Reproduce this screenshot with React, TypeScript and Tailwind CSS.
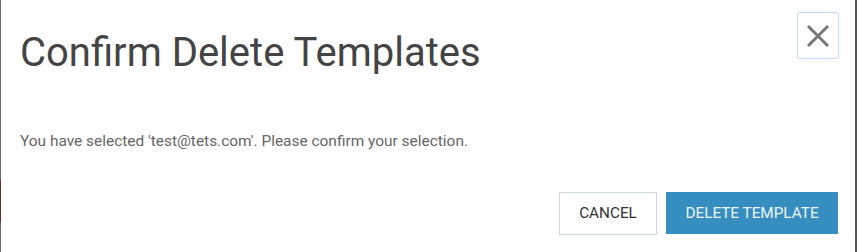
export default function App() {
  return (
    <div className="flex h-[252px] w-[857px] bg-[#5f5f5f] font-['Roboto',sans-serif]">
      {/* backdrop strip on the left */}
      <div className="flex w-px flex-col">
        <div className="h-[180px] bg-[#6a6a6a]" />
        <div className="h-[42px] bg-[#7a2a2a]" />
        <div className="flex-1 bg-[#6a6a6a]" />
      </div>
      <div className="flex w-[854px] flex-col bg-white">
        <div className="flex items-start justify-between pl-[19px] pr-[16px] pt-[12px]">
          <h2 className="pt-[21px] text-[40px] leading-[40px] font-normal text-[#444]">
            Confirm Delete Templates
          </h2>
          <button
            type="button"
            className="flex h-[47px] w-[42px] items-center justify-center rounded-[2px] border border-[#c5dbf7] text-[#777]"
          >
            <svg width="24" height="24" viewBox="0 0 24 24" fill="none" stroke="currentColor" strokeWidth="3">
              <path d="M2 2 L22 22 M22 2 L2 22" />
            </svg>
          </button>
        </div>
        <p className="mt-[58px] pl-[19px] text-[15.45px] leading-[20px] text-[#666]">
          You have selected 'test@tets.com'. Please confirm your selection.
        </p>
        <div className="mt-[41px] flex justify-end gap-[9px] pr-[17px]">
          <button
            type="button"
            className="h-[43px] w-[98px] border border-[#c9d9e3] bg-white text-[15.3px] text-[#333] uppercase"
          >
            Cancel
          </button>
          <button
            type="button"
            className="h-[42px] w-[172px] bg-[#368ec0] text-[15.3px] text-[#eef6fb] uppercase"
          >
            Delete Template
          </button>
        </div>
      </div>
      <div className="w-[2px] bg-[#555]" />
    </div>
  );
}
